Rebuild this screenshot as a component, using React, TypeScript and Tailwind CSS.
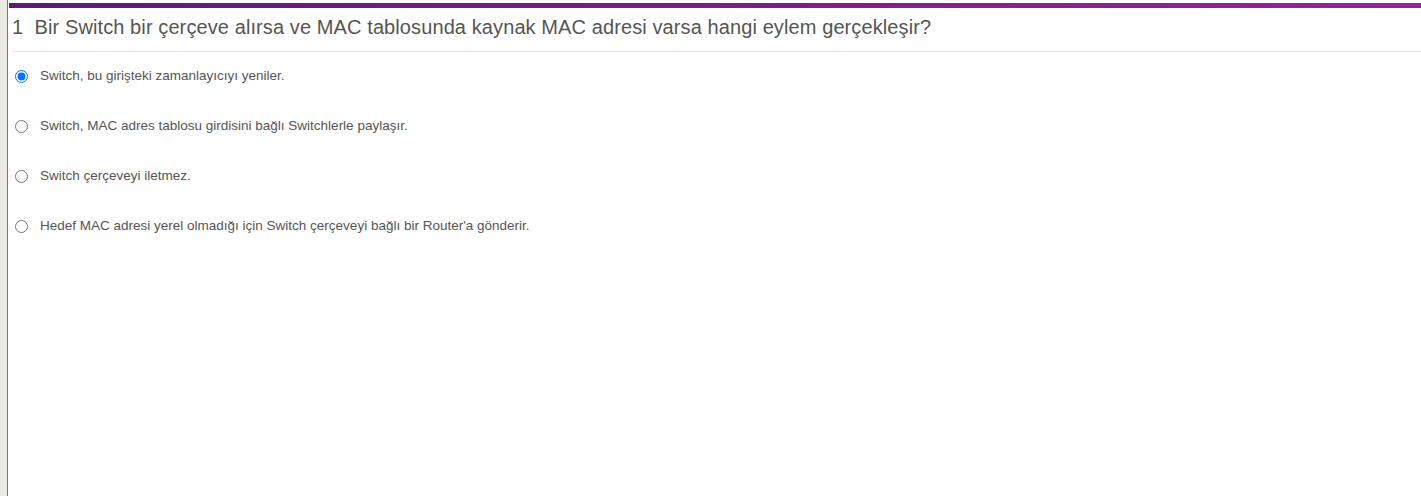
export default function App() {
  const options = [
    "Switch, bu girişteki zamanlayıcıyı yeniler.",
    "Switch, MAC adres tablosu girdisini bağlı Switchlerle paylaşır.",
    "Switch çerçeveyi iletmez.",
    "Hedef MAC adresi yerel olmadığı için Switch çerçeveyi bağlı bir Router'a gönderir.",
  ];

  return (
    <div className="flex h-[496px] w-full bg-white font-['Liberation_Sans',Arial,sans-serif] text-[#555]">
      {/* left frame edge */}
      <div className="w-[7px] shrink-0 bg-[#ebe9e4]" />
      <div className="w-px shrink-0 bg-[#7a7a7a]" />

      <main className="flex-1 pt-[3px]">
        <div className="ml-px h-[5px] bg-gradient-to-r from-[#5b1a78] to-[#9a2197]" />

        <h1 className="ml-[4px] border-b border-[#e6e6e6] pt-[7px] pb-[11px] text-[20px] leading-[25px] tracking-[0.1px]">
          <span className="whitespace-pre">1  </span>Bir Switch bir çerçeve alırsa ve MAC tablosunda kaynak MAC adresi varsa hangi eylem gerçekleşir?
        </h1>

        <div className="mt-[16px] flex flex-col gap-[34px] pl-[7px]">
          {options.map((o, i) => (
            <label key={i} className="flex h-[16px] items-center gap-[12px] text-[13.5px]">
              <input
                type="radio"
                name="q1"
                defaultChecked={i === 0}
                className="m-0 h-[13px] w-[13px] accent-[#0075ff]"
              />
              <span>{o}</span>
            </label>
          ))}
        </div>
      </main>
    </div>
  );
}
